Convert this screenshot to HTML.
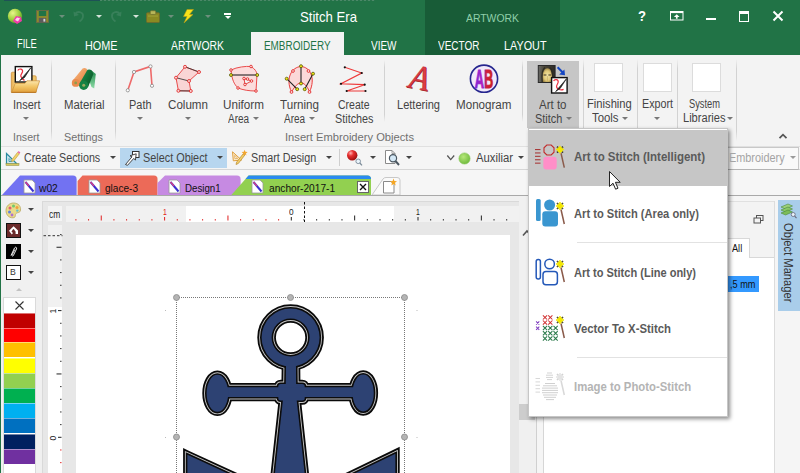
<!DOCTYPE html>
<html>
<head>
<meta charset="utf-8">
<title>Stitch Era</title>
<style>
html,body{margin:0;padding:0;}
body{width:800px;height:473px;overflow:hidden;position:relative;background:#fff;font-family:"Liberation Sans",sans-serif;font-size:12px;color:#444;}
.a{position:absolute;}
.t{position:absolute;white-space:nowrap;line-height:14px;transform-origin:0 50%;}
.c{position:absolute;white-space:nowrap;line-height:14px;text-align:center;}
#title{left:0;top:0;width:800px;height:55px;background:#217346;}
#ctx{left:425px;top:0;width:135px;height:55px;background:#185c37;}
#ribbon{left:1px;top:55px;width:799px;height:91px;background:#f3f3f3;}
#toolbar{left:1px;top:146px;width:799px;height:24px;background:#f5f5f5;}
#tabs{left:1px;top:170px;width:799px;height:25px;background:#f6f6f6;}
#work{left:1px;top:195px;width:799px;height:278px;background:#f0f0f0;}
.sep{position:absolute;width:1px;background:#d4d4d4;top:59px;height:82px;}
.rl{color:#444;font-size:12px;}
.gl{color:#666;font-size:11.5px;}
.wt{color:#fff;font-size:12.5px;}
.arr{position:absolute;width:0;height:0;border-left:3px solid transparent;border-right:3px solid transparent;border-top:3px solid #666;}
</style>
</head>
<body>
<div class="a" style="left:0;top:0;width:1px;height:473px;background:#217346;"></div>
<div class="a" id="title"></div>
<div class="a" id="ctx"></div>
<div class="a" id="ribbon"></div>
<div class="a" id="toolbar"></div>
<div class="a" id="tabs"></div>
<div class="a" id="work"></div>
<div class="a" style="left:4px;top:0;width:96px;height:1px;background:#1e5256;"></div>
<div class="a" style="left:100px;top:0;width:275px;height:1px;background:repeating-linear-gradient(90deg,#6f9a84 0 2px,#2f7350 2px 4px);opacity:0.55;"></div>
<svg class="a" style="left:7px;top:8px" width="17" height="17" viewBox="0 0 17 17">
<defs><radialGradient id="gA" cx="35%" cy="30%" r="75%"><stop offset="0" stop-color="#e9f58a"/><stop offset="0.6" stop-color="#9ccf3c"/><stop offset="1" stop-color="#4e9a2a"/></radialGradient></defs>
<circle cx="8" cy="8" r="7.2" fill="url(#gA)"/>
<path d="M6 13 L9 8 L14 9 L15 13 L10 16 Z" fill="#f03aa8"/><path d="M8 12 L10 9.5 L13 10.2 L11 13.5Z" fill="#fbd3ec"/></svg>
<svg class="a" style="left:36px;top:10px" width="13" height="13" viewBox="0 0 14 14">
<rect x="0.5" y="0.5" width="13" height="13" fill="#8d8a2c" stroke="#6a6a48"/><rect x="3" y="1" width="8" height="5.5" fill="#217346"/><rect x="3" y="8.5" width="8" height="5" fill="#5c5c5c"/><rect x="8" y="9.5" width="2" height="3" fill="#d8d8d8"/></svg>
<div class="arr" style="left:59px;top:15px;border-left-width:3px;border-right-width:3px;border-top:3px solid #6d8f7c;"></div>
<svg class="a" style="left:72px;top:9px" width="14" height="14" viewBox="0 0 14 14"><path d="M3 5 C6 1.5 11.5 3 11 7.5 C10.8 10 9 11.5 7.5 12.5" fill="none" stroke="#38805a" stroke-width="1.8"/><path d="M1.5 2.5 L2 7.5 L7 6 Z" fill="#38805a"/></svg>
<div class="arr" style="left:96px;top:15px;border-left-width:3px;border-right-width:3px;border-top:3px solid #d5e4da;"></div>
<svg class="a" style="left:109px;top:9px" width="14" height="14" viewBox="0 0 14 14"><path d="M11 5 C8 1.5 2.5 3 3 7.5 C3.2 10 5 11.5 6.5 12.5" fill="none" stroke="#38805a" stroke-width="1.8"/><path d="M12.5 2.5 L12 7.5 L7 6 Z" fill="#38805a"/></svg>
<div class="arr" style="left:132.5px;top:15px;border-left-width:3px;border-right-width:3px;border-top:3px solid #d5e4da;"></div>
<svg class="a" style="left:146px;top:9.5px" width="14" height="13" viewBox="0 0 15 14"><rect x="0.5" y="3" width="14" height="10.5" rx="1" fill="#8b8a22" stroke="#6d6c2c"/><rect x="4.5" y="0.8" width="6" height="4" rx="1" fill="#b9b75a" stroke="#6d6c2c" stroke-width="0.8"/><rect x="2" y="6" width="11" height="1" fill="#a5a43f"/></svg>
<div class="arr" style="left:168px;top:15px;border-left-width:3px;border-right-width:3px;border-top:3px solid #6d8f7c;"></div>
<svg class="a" style="left:182px;top:9px" width="13" height="15" viewBox="0 0 13 15"><path d="M5 0.5 L11.5 0.5 L7.5 5.5 L11 5.5 L2 14 L5 7.5 L1.5 7.5 Z" fill="#f7e11a" stroke="#b59b16" stroke-width="0.6"/></svg>
<div class="arr" style="left:204.5px;top:15px;border-left-width:3px;border-right-width:3px;border-top:3px solid #6d8f7c;"></div>
<div class="a" style="left:224px;top:13px;width:7px;height:1.5px;background:#fff;"></div>
<div class="arr" style="left:224.5px;top:16px;border-left-width:3px;border-right-width:3px;border-top:3px solid #fff;"></div>
<svg class="a" style="left:669px;top:10px" width="16" height="12" viewBox="0 0 16 12"><rect x="1.5" y="1.5" width="12.5" height="8.5" fill="none" stroke="#fff" stroke-width="1"/><rect x="1.5" y="1.5" width="12.5" height="1.6" fill="#fff"/><path d="M7.75 4.2 L10.6 7 L8.6 7 L8.6 8.8 L6.9 8.8 L6.9 7 L4.9 7 Z" fill="#fff"/></svg>
<div class="a" style="left:706px;top:18px;width:10px;height:2px;background:#fff;"></div>
<div class="a" style="left:739px;top:11px;width:8px;height:7px;border:1px solid #fff;border-top:3px solid #fff;"></div>
<svg class="a" style="left:772px;top:10px" width="12" height="12" viewBox="0 0 12 12"><path d="M1.5 1.5 L10.5 10.5 M10.5 1.5 L1.5 10.5" stroke="#fff" stroke-width="2"/></svg>
<div class="a" style="left:251px;top:32px;width:93px;height:24px;background:#f3f3f3;"></div>
<div class="a" style="left:51px;top:59px;width:1px;height:82px;background:linear-gradient(#f3f3f3,#d2d2d2 12%,#d2d2d2 88%,#f3f3f3);"></div>
<div class="a" style="left:115px;top:59px;width:1px;height:82px;background:linear-gradient(#f3f3f3,#d2d2d2 12%,#d2d2d2 88%,#f3f3f3);"></div>
<div class="a" style="left:583px;top:59px;width:1px;height:82px;background:linear-gradient(#f3f3f3,#d2d2d2 12%,#d2d2d2 88%,#f3f3f3);"></div>
<div class="a" style="left:637px;top:59px;width:1px;height:82px;background:linear-gradient(#f3f3f3,#d2d2d2 12%,#d2d2d2 88%,#f3f3f3);"></div>
<div class="a" style="left:677px;top:59px;width:1px;height:82px;background:linear-gradient(#f3f3f3,#d2d2d2 12%,#d2d2d2 88%,#f3f3f3);"></div>
<div class="a" style="left:736px;top:59px;width:1px;height:82px;background:linear-gradient(#f3f3f3,#d2d2d2 12%,#d2d2d2 88%,#f3f3f3);"></div>
<div class="a" style="left:384px;top:60px;width:1px;height:62px;background:linear-gradient(#f3f3f3,#d2d2d2 12%,#d2d2d2 88%,#f3f3f3);"></div>
<div class="a" style="left:522px;top:60px;width:1px;height:62px;background:linear-gradient(#f3f3f3,#d2d2d2 12%,#d2d2d2 88%,#f3f3f3);"></div>
<div class="a" style="left:527px;top:61px;width:52px;height:67px;background:#c6c6c6;"></div>
<svg class="a" style="left:9px;top:63px" width="33" height="32" viewBox="9 63 33 32">
<defs><linearGradient id="gF" x1="0" y1="0" x2="0" y2="1"><stop offset="0" stop-color="#fbe6ac"/><stop offset="0.5" stop-color="#f2c566"/><stop offset="1" stop-color="#e2a03c"/></linearGradient>
<linearGradient id="gF2" x1="0" y1="0" x2="1" y2="0"><stop offset="0" stop-color="#e9b050"/><stop offset="0.25" stop-color="#f8dc98"/><stop offset="1" stop-color="#efc468"/></linearGradient></defs>
<path d="M11.3 92.3 L11.3 73.4 Q11.3 72.2 12.5 72.2 L15.5 72.2 L15.5 75.8 L35 75.8 Q36.2 75.8 36.2 77 L36.2 92.3 Z" fill="url(#gF2)" stroke="#c88a34" stroke-width="0.7"/>
<rect x="15.3" y="66.6" width="16.6" height="15.4" fill="#fff" stroke="#111" stroke-width="1.4"/>
<path d="M17.8 70.6 C18.8 68.2 22.8 68.6 22.6 71.4 C22.4 73.4 20.4 74.2 20.8 76.2 C21.2 78.2 23 79.6 24.5 80.4" fill="none" stroke="#ee3040" stroke-width="1.2"/>
<path d="M30.8 67.8 L23.4 76.4 L19.6 80.8 L24.6 77.4 Z" fill="#222" stroke="#222" stroke-width="0.7"/>
<path d="M15.2 83.4 L24.9 83.4 L26.9 80.8 L39.6 80.8 L35.8 92.4 L11.6 92.4 Z" fill="url(#gF)" stroke="#c98c36" stroke-width="0.7"/>
<path d="M11.6 92.4 L35.8 92.4" stroke="#b87424" stroke-width="0.9"/>
</svg>
<svg class="a" style="left:68px;top:63px" width="32" height="30" viewBox="68 63 32 30">
<defs><linearGradient id="gO" x1="0" y1="0" x2="1" y2="1"><stop offset="0" stop-color="#f8c08c"/><stop offset="0.5" stop-color="#ee9a5c"/><stop offset="1" stop-color="#d87a3c"/></linearGradient>
<linearGradient id="gG" x1="0" y1="0" x2="1" y2="0.6"><stop offset="0" stop-color="#2e9858"/><stop offset="0.45" stop-color="#157a3e"/><stop offset="1" stop-color="#0c5a2a"/></linearGradient>
<linearGradient id="gGl" x1="0" y1="0" x2="0" y2="1"><stop offset="0" stop-color="#1f8a4a"/><stop offset="1" stop-color="#8fdca8"/></linearGradient></defs>
<path d="M72.7 80.5 L82.6 68.4 Q84.6 67.4 86.6 68.8 L88.4 73 L78.7 85.3 Z" fill="url(#gO)"/>
<circle cx="75.7" cy="82.9" r="3.9" fill="#ea8c4e"/><circle cx="75.7" cy="82.9" r="1.4" fill="#8e9c4c"/>
<path d="M91.5 70.5 L95.8 74 L94.2 88.6 L91.5 87 L89 80 Z" fill="url(#gGl)"/>
<path d="M79.6 83.2 L87.5 69.8 Q89.7 68.8 91.8 70.4 L93.4 74 L87.9 87.6 Z" fill="url(#gG)"/>
<circle cx="83.7" cy="85.3" r="4.6" fill="#168244"/><circle cx="83.7" cy="85.3" r="1.5" fill="#9aa860"/>
</svg>
<svg class="a" style="left:122px;top:60px" width="40" height="36" viewBox="122 60 40 36"><path d="M127.8 90.3 L134 72 L150.5 66.4 L152 85.8" fill="none" stroke="#ee6a6a" stroke-width="1.6"/><circle cx="127.8" cy="90.3" r="1.6" fill="#fff" stroke="#888" stroke-width="0.8"/><circle cx="134" cy="72" r="1.6" fill="#fff" stroke="#888" stroke-width="0.8"/><circle cx="150.5" cy="66.4" r="1.6" fill="#fff" stroke="#888" stroke-width="0.8"/><circle cx="152" cy="85.8" r="1.6" fill="#fff" stroke="#888" stroke-width="0.8"/></svg>
<svg class="a" style="left:170px;top:60px" width="36" height="36" viewBox="170 60 36 36"><path d="M185 66.8 L199 72 L189 81 L190.8 91 L178.4 90.8 L176 77.7 Z" fill="#f9d5d5" stroke="#e84c4c" stroke-width="1"/><path d="M185 66.8 L199 72 M176 77.7 L189 81 M178.4 90.8 L190.8 91" stroke="#333" stroke-width="0.85"/><circle cx="185" cy="66.8" r="1.5" fill="#f9d5d5" stroke="#e02020" stroke-width="0.8"/><circle cx="199" cy="72" r="1.5" fill="#f9d5d5" stroke="#e02020" stroke-width="0.8"/><circle cx="176" cy="77.7" r="1.5" fill="#f9d5d5" stroke="#e02020" stroke-width="0.8"/><circle cx="189" cy="81" r="1.5" fill="#f9d5d5" stroke="#e02020" stroke-width="0.8"/><circle cx="178.4" cy="90.8" r="1.5" fill="#f9d5d5" stroke="#e02020" stroke-width="0.8"/><circle cx="190.8" cy="91" r="1.5" fill="#f9d5d5" stroke="#e02020" stroke-width="0.8"/></svg>
<svg class="a" style="left:226px;top:60px" width="36" height="36" viewBox="226 60 36 36"><path d="M231 70 C237 67 246 66 251 66.5 C255 69 257 72 257 75 L256 91 C249 91 243 90 238 88 C234 84 232 80 231 70 Z" fill="#fbdcdc" stroke="#ea4c4c" stroke-width="1"/><path d="M244 78.5 L251.5 81 L245 84.5 Z" fill="#f3f3f3" stroke="#e02020" stroke-width="0.8"/><circle cx="231" cy="70" r="1.3" fill="#fbdcdc" stroke="#e02020" stroke-width="0.8"/><circle cx="251" cy="66.5" r="1.3" fill="#fbdcdc" stroke="#e02020" stroke-width="0.8"/><circle cx="256" cy="91" r="1.3" fill="#fbdcdc" stroke="#e02020" stroke-width="0.8"/><circle cx="238" cy="88" r="1.3" fill="#fbdcdc" stroke="#e02020" stroke-width="0.8"/><circle cx="244" cy="78.5" r="1.3" fill="#fbdcdc" stroke="#e02020" stroke-width="0.8"/><circle cx="251.5" cy="81" r="1.3" fill="#fbdcdc" stroke="#e02020" stroke-width="0.8"/><circle cx="245" cy="84.5" r="1.3" fill="#fbdcdc" stroke="#e02020" stroke-width="0.8"/><circle cx="247.5" cy="79" r="1.3" fill="#fbdcdc" stroke="#e02020" stroke-width="0.8"/><path d="M231 75 L257.2 75" stroke="#111" stroke-width="1"/><circle cx="231" cy="75" r="1.5" fill="#e8e020" stroke="#55550a" stroke-width="0.8"/><circle cx="257.2" cy="75" r="1.5" fill="#e8e020" stroke="#55550a" stroke-width="0.8"/></svg>
<svg class="a" style="left:282px;top:60px" width="36" height="36" viewBox="282 60 36 36"><path d="M291.5 92 C285 78 292 67 301 66.5 C310 67 316 78 309.5 92 C308 88 306 84 301 82.5 C296 84 294 88 291.5 92 Z" fill="#fbd8d8" stroke="#ea3c3c" stroke-width="1"/><path d="M301 66.2 L301 83.5 M286.7 78.7 L297.2 89.2 M313 73.7 L304.7 89.2" stroke="#222" stroke-width="1.1"/><circle cx="291.5" cy="92" r="1.4" fill="#fbd8d8" stroke="#e02020" stroke-width="0.8"/><circle cx="309.5" cy="92" r="1.4" fill="#fbd8d8" stroke="#e02020" stroke-width="0.8"/><circle cx="293" cy="71" r="1.4" fill="#fbd8d8" stroke="#e02020" stroke-width="0.8"/><circle cx="308.5" cy="71" r="1.4" fill="#fbd8d8" stroke="#e02020" stroke-width="0.8"/><circle cx="301" cy="66.2" r="1.5" fill="#f0e810" stroke="#55550a" stroke-width="0.8"/><circle cx="301" cy="83.5" r="1.5" fill="#f0e810" stroke="#55550a" stroke-width="0.8"/><circle cx="286.7" cy="78.7" r="1.5" fill="#f0e810" stroke="#55550a" stroke-width="0.8"/><circle cx="297.2" cy="89.2" r="1.5" fill="#f0e810" stroke="#55550a" stroke-width="0.8"/><circle cx="313" cy="73.7" r="1.5" fill="#f0e810" stroke="#55550a" stroke-width="0.8"/><circle cx="304.7" cy="89.2" r="1.5" fill="#f0e810" stroke="#55550a" stroke-width="0.8"/></svg>
<svg class="a" style="left:338px;top:62px" width="32" height="34" viewBox="338 62 32 34"><path d="M344.8 67.3 L361.7 73 L341 83.8 L364.7 84.7 L346.7 91 L365.5 91" fill="none" stroke="#ee3a3a" stroke-width="1.2"/><circle cx="344.8" cy="67.3" r="1.1" fill="#111"/><circle cx="361.7" cy="73" r="1.1" fill="#111"/><circle cx="341" cy="83.8" r="1.1" fill="#111"/><circle cx="364.7" cy="84.7" r="1.1" fill="#111"/><circle cx="346.7" cy="91" r="1.1" fill="#111"/><circle cx="365.5" cy="91" r="1.1" fill="#111"/></svg>
<div class="a" style="left:408.4px;top:59.8px;width:30px;height:38px;font-family:'Liberation Serif',serif;font-style:italic;font-size:35px;line-height:38px;color:#dc3c46;-webkit-text-stroke:0.5px #c02a34;text-shadow:0.7px 0.7px 0 #8a1a22;transform:rotate(11deg) scaleX(0.92);transform-origin:50% 60%;">A</div>
<svg class="a" style="left:468px;top:63px" width="32" height="32" viewBox="0 0 32 32">
<defs><linearGradient id="gM" x1="0" y1="0" x2="1" y2="0"><stop offset="0" stop-color="#7a28d8"/><stop offset="0.42" stop-color="#b020c0"/><stop offset="0.52" stop-color="#5030c0"/><stop offset="0.6" stop-color="#d02040"/><stop offset="1" stop-color="#c82020"/></linearGradient></defs>
<circle cx="16" cy="15.7" r="13.6" fill="#f1eafa" stroke="#26268e" stroke-width="1.6"/>
<text x="16" y="24.8" text-anchor="middle" font-family="Liberation Sans" font-weight="bold" font-size="25.5" fill="url(#gM)" stroke="url(#gM)" stroke-width="0.9" textLength="18.5" lengthAdjust="spacingAndGlyphs">AB</text></svg>
<svg class="a" style="left:536px;top:63px" width="34" height="32" viewBox="536 63 34 32">
<defs><linearGradient id="gMB" x1="0" y1="0" x2="1" y2="0"><stop offset="0" stop-color="#6a6a68"/><stop offset="0.35" stop-color="#4a4638"/><stop offset="1" stop-color="#2c2a26"/></linearGradient>
<radialGradient id="gMona" cx="50%" cy="55%" r="60%"><stop offset="0" stop-color="#f2e6a8"/><stop offset="0.6" stop-color="#e0c878"/><stop offset="1" stop-color="#8a7238"/></radialGradient></defs>
<rect x="538.3" y="65.5" width="16.8" height="17" fill="url(#gMB)" stroke="#2a2a2a" stroke-width="1"/>
<path d="M542.6 82 C542 74 543.5 68.3 547.4 68.2 C551.4 68.3 552.6 74 552 82 Z" fill="url(#gMona)"/>
<path d="M543.6 75 L546.4 75 M548.4 75 L551.2 75" stroke="#3a3020" stroke-width="1.1"/>
<path d="M547.4 76 L547.4 81.5" stroke="#c8ae60" stroke-width="0.7"/>
<path d="M542.2 82 C541.5 75 542.5 69 545 67.5 M552.5 82 C553 75 552.3 69 549.8 67.5" stroke="#2c2a20" stroke-width="1.2" fill="none"/>
<path d="M557.6 67.3 L563 72.8" stroke="#1446c4" stroke-width="2"/><path d="M565 75.2 L559.2 74.6 L564.4 69.4 Z" fill="#1446c4"/>
<rect x="551.6" y="77.6" width="15.5" height="15.4" fill="#fff" stroke="#111" stroke-width="1.4"/>
<path d="M553.6 81 C554.6 78.8 558.4 79.2 558.2 82 C558 84 556.2 85 556.6 87 C557.2 89.4 560.5 90.6 563.6 89.4" fill="none" stroke="#ee3040" stroke-width="1.2"/>
<path d="M566.3 79 L559 87.5 L555.6 91.6 L560.2 88.4 Z" fill="#222" stroke="#222" stroke-width="0.7"/>
</svg>
<div class="a" style="left:594px;top:63px;width:27px;height:26.5px;background:#fff;border:1px solid #dcdcdc;"></div>
<div class="a" style="left:643px;top:63px;width:27px;height:26.5px;background:#fff;border:1px solid #dcdcdc;"></div>
<div class="a" style="left:692px;top:63px;width:27px;height:26.5px;background:#fff;border:1px solid #dcdcdc;"></div>
<div class="arr" style="left:23px;top:117px;border-left-width:3px;border-right-width:3px;border-top:3px solid #777;"></div>
<div class="arr" style="left:136.5px;top:117px;border-left-width:3px;border-right-width:3px;border-top:3px solid #777;"></div>
<div class="arr" style="left:184.5px;top:117px;border-left-width:3px;border-right-width:3px;border-top:3px solid #777;"></div>
<div class="arr" style="left:253px;top:117px;border-left-width:3px;border-right-width:3px;border-top:3px solid #777;"></div>
<div class="arr" style="left:309px;top:117px;border-left-width:3px;border-right-width:3px;border-top:3px solid #777;"></div>
<div class="arr" style="left:566px;top:117px;border-left-width:3px;border-right-width:3px;border-top:3px solid #777;"></div>
<div class="arr" style="left:622px;top:117px;border-left-width:3px;border-right-width:3px;border-top:3px solid #777;"></div>
<div class="arr" style="left:654px;top:117px;border-left-width:3px;border-right-width:3px;border-top:3px solid #777;"></div>
<div class="arr" style="left:727px;top:117px;border-left-width:3px;border-right-width:3px;border-top:3px solid #777;"></div>
<svg class="a" style="left:778px;top:132px" width="10" height="8" viewBox="0 0 10 8"><path d="M1.5 6.2 L5 2.6 L8.5 6.2" fill="none" stroke="#555" stroke-width="1.7"/></svg>
<div class="a" style="left:1px;top:145.6px;width:799px;height:1px;background:#e0e0e0;"></div>
<div class="a" style="left:1px;top:169px;width:799px;height:1px;background:#d6d6d6;"></div>
<div class="a" style="left:120px;top:148px;width:107px;height:20px;background:#b7d6ef;"></div>
<svg class="a" style="left:5px;top:149px" width="17" height="17" viewBox="0 0 17 17">
<path d="M1.5 15 L1.5 4.5 L12 15 Z" fill="#cfe8f0" stroke="#2a8aa0" stroke-width="1.2"/><path d="M4 12.5 L4 9.5 L7 12.5 Z" fill="#f3f3f3" stroke="#2a8aa0" stroke-width="0.8"/>
<rect x="1" y="14.5" width="13" height="2" fill="#d8c860" stroke="#8a8a40" stroke-width="0.5"/>
<path d="M7 10.5 L12.6 3.3 L14.4 4.7 L8.8 11.9 L6.6 12.6 Z" fill="#f2d36a" stroke="#b89a40" stroke-width="0.6"/><path d="M12.6 3.3 L13.6 2 L15.4 3.4 L14.4 4.7Z" fill="#e868b0"/></svg>
<div class="arr" style="left:109.5px;top:156px;border-left-width:3px;border-right-width:3px;border-top:3px solid #444;"></div>
<svg class="a" style="left:124px;top:150px" width="17" height="16" viewBox="0 0 17 16">
<rect x="8.5" y="1.5" width="6.5" height="6" fill="#fff" stroke="#333" stroke-width="1"/>
<path d="M1.5 14.5 L8 6.8 L6 5.8 L12.2 3.8 L11.4 10.2 L9.8 8.4 L3.5 15.3 Z" fill="#fff" stroke="#333" stroke-width="0.9"/></svg>
<div class="arr" style="left:217px;top:156px;border-left-width:3px;border-right-width:3px;border-top:3px solid #444;"></div>
<svg class="a" style="left:231px;top:149px" width="18" height="17" viewBox="0 0 18 17">
<path d="M1.5 2.8 L10.5 11 L2.3 11.8 Z" fill="#fdeccc" stroke="#e0a040" stroke-width="1"/><path d="M3.6 6.3 L6.8 9.4 L3.9 9.7 Z" fill="#f5f5f5" stroke="#e0a040" stroke-width="0.7"/>
<path d="M5.6 13.2 L12.3 4.6 L14 5.9 L7.3 14.5 L5 15.5 Z" fill="#f3cf68" stroke="#b88a30" stroke-width="0.7"/>
<path d="M13.6 0.8 L14.4 2.8 L16.6 3 L14.9 4.4 L15.5 6.5 L13.6 5.3 L11.7 6.5 L12.3 4.4 L10.6 3 L12.8 2.8 Z" fill="#f2a630"/></svg>
<div class="arr" style="left:326px;top:156px;border-left-width:3px;border-right-width:3px;border-top:3px solid #444;"></div>
<div class="a" style="left:339px;top:149px;width:1px;height:17px;background:#cfcfcf;"></div>
<svg class="a" style="left:346px;top:149px" width="18" height="18" viewBox="0 0 18 18">
<defs><radialGradient id="gR" cx="35%" cy="30%" r="70%"><stop offset="0" stop-color="#ffb0b0"/><stop offset="0.4" stop-color="#e83030"/><stop offset="1" stop-color="#a01010"/></radialGradient></defs>
<circle cx="6.2" cy="6.2" r="5.2" fill="url(#gR)"/><circle cx="12.2" cy="12.3" r="2.3" fill="#eaf4fb" stroke="#7a8a98" stroke-width="0.9"/><path d="M13.8 14 L16 16.3" stroke="#7a8a98" stroke-width="1.2"/></svg>
<div class="arr" style="left:369.5px;top:156px;border-left-width:3px;border-right-width:3px;border-top:3px solid #444;"></div>
<svg class="a" style="left:384px;top:149px" width="17" height="18" viewBox="0 0 17 18">
<path d="M1.5 1.5 L8 1.5 L11 4.5 L11 14.5 L1.5 14.5 Z" fill="#fff" stroke="#8a8a8a" stroke-width="1"/><path d="M8 1.5 L8 4.5 L11 4.5" fill="none" stroke="#8a8a8a" stroke-width="0.8"/>
<circle cx="9" cy="9.2" r="3.6" fill="#d4e8f6" stroke="#4a5660" stroke-width="1.2"/><path d="M11.5 12 L15 16" stroke="#4a5660" stroke-width="1.9"/></svg>
<div class="arr" style="left:406px;top:156px;border-left-width:3px;border-right-width:3px;border-top:3px solid #444;"></div>
<svg class="a" style="left:446px;top:154px" width="10" height="8" viewBox="0 0 10 8"><path d="M1.3 1.5 L4.7 5.6 L8.2 1.5" fill="none" stroke="#555" stroke-width="1.3"/></svg>
<svg class="a" style="left:458px;top:152px" width="13" height="13" viewBox="0 0 13 13"><defs><radialGradient id="gGr" cx="40%" cy="35%" r="70%"><stop offset="0" stop-color="#b6e87a"/><stop offset="1" stop-color="#6cb83a"/></radialGradient></defs><circle cx="6.5" cy="6.5" r="5.6" fill="url(#gGr)" stroke="#8cc85c" stroke-width="0.6"/></svg>
<div class="arr" style="left:518px;top:156px;border-left-width:3px;border-right-width:3px;border-top:3px solid #444;"></div>
<div class="a" style="left:700px;top:146.5px;width:99px;height:23.5px;background:#f9f9f9;border:1px solid #c8c8c8;border-bottom:1.3px solid #b4b4b4;box-sizing:border-box;"></div>
<div class="arr" style="left:790px;top:156px;border-left-width:3px;border-right-width:3px;border-top:3px solid #9a9a9a;"></div>
<svg class="a" style="left:0;top:170px" width="420" height="27" viewBox="0 170 420 27"><path d="M2 195 L20 175.5 L73 175.5 Q76.6 175.5 76.6 179 L76.6 195 Z" fill="#7272f2"/><path d="M77.6 195 L77.6 181 L82.5 175.5 L154 175.5 Q157.5 175.5 157.5 179 L157.5 195 Z" fill="#ec6a58"/><path d="M157.5 195 L157.5 183 L165 175.5 L237 175.5 Q240.6 175.5 240.6 179 L240.6 195 Z" fill="#c68ae2"/><path d="M231.4 195 L248.6 175.5 L367.5 175.5 Q371 175.5 371 179 L371 195 Z" fill="#92d050"/><path d="M248.6 175.5 L367.5 175.5 Q371 175.5 371 179 L245.6 179 Z" fill="#2a8af0"/><path d="M372 195 L383 179 Q384 177.5 386 177.5 L397 177.5 Q400 177.5 400 180 L400 195 Z" fill="#fafafa" stroke="#c8c8c8" stroke-width="1"/></svg>
<svg class="a" style="left:22.5px;top:179px" width="13" height="15" viewBox="0 0 13 15"><path d="M1 1 L9 1 L12 4 L12 14 L1 14 Z" fill="#fff" stroke="#9a9a9a" stroke-width="0.8"/><path d="M2.5 3 L10.5 12.5" stroke="#3a30d0" stroke-width="2"/><path d="M2.5 3 L6 7" stroke="#e04080" stroke-width="1.2"/></svg>
<svg class="a" style="left:88px;top:179px" width="13" height="15" viewBox="0 0 13 15"><path d="M1 1 L9 1 L12 4 L12 14 L1 14 Z" fill="#fff" stroke="#9a9a9a" stroke-width="0.8"/><path d="M2.5 3 L10.5 12.5" stroke="#3a30d0" stroke-width="2"/><path d="M2.5 3 L6 7" stroke="#e04080" stroke-width="1.2"/></svg>
<svg class="a" style="left:168px;top:179px" width="13" height="15" viewBox="0 0 13 15"><path d="M1 1 L9 1 L12 4 L12 14 L1 14 Z" fill="#fff" stroke="#9a9a9a" stroke-width="0.8"/><path d="M2.5 3 L10.5 12.5" stroke="#3a30d0" stroke-width="2"/><path d="M2.5 3 L6 7" stroke="#e04080" stroke-width="1.2"/></svg>
<svg class="a" style="left:251px;top:179px" width="13" height="15" viewBox="0 0 13 15"><path d="M1 1 L9 1 L12 4 L12 14 L1 14 Z" fill="#fff" stroke="#9a9a9a" stroke-width="0.8"/><path d="M2.5 3 L10.5 12.5" stroke="#3a30d0" stroke-width="2"/><path d="M2.5 3 L6 7" stroke="#e04080" stroke-width="1.2"/></svg>
<div class="a" style="left:357px;top:181px;width:10px;height:10px;background:#fff;border:1px solid #666;"></div>
<svg class="a" style="left:358px;top:182px" width="10" height="10" viewBox="0 0 10 10"><path d="M2 2 L8 8 M8 2 L2 8" stroke="#111" stroke-width="1.4"/></svg>
<svg class="a" style="left:382px;top:178px" width="16" height="16" viewBox="0 0 16 16"><path d="M1.5 3.5 L9 3.5 L12 6.5 L12 15 L1.5 15 Z" fill="#fff" stroke="#8a8a8a" stroke-width="1"/>
<path d="M11.5 0.5 L12.4 3 L15 3.2 L13 4.8 L13.7 7.4 L11.5 6 L9.3 7.4 L10 4.8 L8 3.2 L10.6 3 Z" fill="#f5a623"/></svg>
<div class="a" style="left:1px;top:195px;width:799px;height:1px;background:#a9a9a9;"></div>
<div class="a" style="left:1px;top:196px;width:41px;height:277px;background:#f0f0f0;"></div>
<div class="a" style="left:42px;top:201px;width:1px;height:272px;background:#d9d9d9;"></div>
<div class="a" style="left:43px;top:202px;width:476px;height:271px;background:#e7e7e7;"></div>
<div class="a" style="left:42px;top:201px;width:478px;height:1px;background:#d9d9d9;"></div>
<div class="a" style="left:48px;top:206px;width:14px;height:15px;background:#f4f4f4;"></div>
<div class="a" style="left:66px;top:206px;width:453px;height:16px;background:#f1f1f1;"></div>
<div class="a" style="left:186px;top:206px;width:208px;height:16px;background:#fff;"></div>
<div class="a" style="left:48px;top:225px;width:14px;height:248px;background:#f1f1f1;"></div>
<div class="a" style="left:48px;top:307px;width:14px;height:166px;background:#fff;"></div>
<div class="a" style="left:76px;top:235px;width:433.5px;height:238px;background:#fff;"></div>
<svg class="a" style="left:0;top:196px" width="520" height="277" viewBox="0 196 520 277"><rect x="75.41" y="219.10" width="1" height="1.4" fill="#e02020"/><rect x="88.08" y="219.10" width="1" height="1.4" fill="#e02020"/><rect x="100.75" y="215.50" width="1" height="5" fill="#e02020"/><rect x="113.42" y="219.10" width="1" height="1.4" fill="#e02020"/><rect x="126.09" y="219.10" width="1" height="1.4" fill="#e02020"/><rect x="138.76" y="219.10" width="1" height="1.4" fill="#e02020"/><rect x="151.43" y="219.10" width="1" height="1.4" fill="#e02020"/><rect x="164.10" y="217.00" width="1" height="3.5" fill="#e02020"/><rect x="176.77" y="219.10" width="1" height="1.4" fill="#e02020"/><rect x="189.44" y="219.10" width="1" height="1.4" fill="#e02020"/><rect x="202.11" y="219.10" width="1" height="1.4" fill="#e02020"/><rect x="214.78" y="219.10" width="1" height="1.4" fill="#e02020"/><rect x="227.45" y="215.50" width="1" height="5" fill="#e02020"/><rect x="240.12" y="219.10" width="1" height="1.4" fill="#e02020"/><rect x="252.79" y="219.10" width="1" height="1.4" fill="#e02020"/><rect x="265.46" y="219.10" width="1" height="1.4" fill="#e02020"/><rect x="278.13" y="219.10" width="1" height="1.4" fill="#e02020"/><rect x="290.80" y="217.00" width="1" height="3.5" fill="#222"/><rect x="303.47" y="219.10" width="1" height="1.4" fill="#222"/><rect x="316.14" y="219.10" width="1" height="1.4" fill="#222"/><rect x="328.81" y="219.10" width="1" height="1.4" fill="#222"/><rect x="341.48" y="219.10" width="1" height="1.4" fill="#222"/><rect x="354.15" y="215.50" width="1" height="5" fill="#222"/><rect x="366.82" y="219.10" width="1" height="1.4" fill="#222"/><rect x="379.49" y="219.10" width="1" height="1.4" fill="#222"/><rect x="392.16" y="219.10" width="1" height="1.4" fill="#222"/><rect x="404.83" y="219.10" width="1" height="1.4" fill="#222"/><rect x="417.50" y="217.00" width="1" height="3.5" fill="#222"/><rect x="430.17" y="219.10" width="1" height="1.4" fill="#222"/><rect x="442.84" y="219.10" width="1" height="1.4" fill="#222"/><rect x="455.51" y="219.10" width="1" height="1.4" fill="#222"/><rect x="468.18" y="219.10" width="1" height="1.4" fill="#222"/><rect x="480.85" y="215.50" width="1" height="5" fill="#222"/><rect x="493.52" y="219.10" width="1" height="1.4" fill="#222"/><rect x="506.19" y="219.10" width="1" height="1.4" fill="#222"/><rect x="60.10" y="462.14" width="1.4" height="1" fill="#e02020"/><rect x="60.10" y="449.47" width="1.4" height="1" fill="#e02020"/><rect x="58.00" y="436.80" width="3.5" height="1" fill="#222"/><rect x="60.10" y="424.13" width="1.4" height="1" fill="#222"/><rect x="60.10" y="411.46" width="1.4" height="1" fill="#222"/><rect x="60.10" y="398.79" width="1.4" height="1" fill="#222"/><rect x="60.10" y="386.12" width="1.4" height="1" fill="#222"/><rect x="56.50" y="373.45" width="5" height="1" fill="#222"/><rect x="60.10" y="360.78" width="1.4" height="1" fill="#222"/><rect x="60.10" y="348.11" width="1.4" height="1" fill="#222"/><rect x="60.10" y="335.44" width="1.4" height="1" fill="#222"/><rect x="60.10" y="322.77" width="1.4" height="1" fill="#222"/><rect x="58.00" y="310.10" width="3.5" height="1" fill="#222"/><rect x="60.10" y="297.43" width="1.4" height="1" fill="#222"/><rect x="60.10" y="284.76" width="1.4" height="1" fill="#222"/><rect x="60.10" y="272.09" width="1.4" height="1" fill="#222"/><rect x="60.10" y="259.42" width="1.4" height="1" fill="#222"/><rect x="56.50" y="246.75" width="5" height="1" fill="#222"/><rect x="60.10" y="234.08" width="1.4" height="1" fill="#222"/><path d="M304.5 202 L304.5 222" stroke="#111" stroke-width="1" stroke-dasharray="2.5 2"/><path d="M43.5 235.7 L62.5 235.7" stroke="#333" stroke-width="1" stroke-dasharray="2.5 2"/></svg>
<svg class="a" style="left:5px;top:202px" width="17" height="17" viewBox="0 0 17 17">
<path d="M8.5 1 C13.5 1 16 4.5 15.5 8 C15 11.5 12.5 10 11 11.5 C9.5 13 11.5 15.5 8 15.8 C3.5 16 1 12.5 1 8.5 C1 4 4.5 1 8.5 1 Z" fill="#eadb8a" stroke="#b8a860" stroke-width="0.8"/>
<circle cx="5" cy="6" r="1.5" fill="#e06070"/><circle cx="8.5" cy="4" r="1.5" fill="#70c870"/><circle cx="12" cy="5.5" r="1.5" fill="#f0a040"/><circle cx="4.5" cy="10" r="1.5" fill="#6080e0"/><circle cx="7" cy="13" r="1.4" fill="#b070d0"/><circle cx="12.3" cy="8.6" r="1.2" fill="#60c0d0"/></svg>
<div class="a" style="left:6px;top:223px;width:13px;height:13px;background:#6b2a2a;border:1px solid #111;"></div>
<svg class="a" style="left:6px;top:223px" width="15" height="15" viewBox="0 0 15 15"><path d="M3 7.8 L7.6 3.2 L12 7.6 L12 11 L9.6 11 L9.6 8.4 L7.4 6.4 L5.4 8.4 L7 10 L5.8 11.4 Z" fill="#fff"/><path d="M6.2 7.2 L7.5 5.9 L8.8 7.2 L7.5 8.5 Z" fill="#6b2a2a"/></svg>
<div class="a" style="left:6px;top:244px;width:15px;height:15px;background:#000;"></div>
<svg class="a" style="left:6px;top:244px" width="15" height="15" viewBox="0 0 15 15"><path d="M5 11.5 L8.5 4 C9.3 2.5 11.3 3.3 10.5 5 L7.3 11.6 C6.9 12.5 5.6 12 6 11 L8.8 5.5" fill="none" stroke="#fff" stroke-width="0.9"/></svg>
<div class="a" style="left:6px;top:265px;width:13px;height:13px;background:#fff;border:1px solid #111;"></div>
<div class="arr" style="left:27.7px;top:208px;border-left-width:3px;border-right-width:3px;border-top:3px solid #444;"></div>
<div class="arr" style="left:27.7px;top:229px;border-left-width:3px;border-right-width:3px;border-top:3px solid #444;"></div>
<div class="arr" style="left:27.7px;top:249.5px;border-left-width:3px;border-right-width:3px;border-top:3px solid #444;"></div>
<div class="arr" style="left:27.7px;top:270.5px;border-left-width:3px;border-right-width:3px;border-top:3px solid #444;"></div>
<div class="a" style="left:16px;top:288px;width:0;height:0;border-left:3.5px solid transparent;border-right:3.5px solid transparent;border-bottom:3.5px solid #c2c2c2;"></div>
<div class="a" style="left:2.5px;top:297px;width:31px;height:176px;background:#fff;border-left:1px solid #dadada;border-right:1px solid #dadada;border-top:1px solid #dadada;"></div>
<svg class="a" style="left:13.5px;top:299.7px" width="11" height="11" viewBox="0 0 11 11"><path d="M1.5 1.5 L9.5 9.5 M9.5 1.5 L1.5 9.5" stroke="#333" stroke-width="1.1"/></svg>
<div class="a" style="left:3.5px;top:312.6px;width:31px;height:15.2px;background:#c00000;border-top:1px solid rgba(255,255,255,0.45);box-sizing:border-box;"></div>
<div class="a" style="left:3.5px;top:327.8px;width:31px;height:14.6px;background:#ff0000;border-top:1px solid rgba(255,255,255,0.45);box-sizing:border-box;"></div>
<div class="a" style="left:3.5px;top:342.4px;width:31px;height:15.1px;background:#ffc000;border-top:1px solid rgba(255,255,255,0.45);box-sizing:border-box;"></div>
<div class="a" style="left:3.5px;top:357.5px;width:31px;height:15.5px;background:#ffff00;border-top:1px solid rgba(255,255,255,0.45);box-sizing:border-box;"></div>
<div class="a" style="left:3.5px;top:373px;width:31px;height:15px;background:#92d050;border-top:1px solid rgba(255,255,255,0.45);box-sizing:border-box;"></div>
<div class="a" style="left:3.5px;top:388px;width:31px;height:15px;background:#00b050;border-top:1px solid rgba(255,255,255,0.45);box-sizing:border-box;"></div>
<div class="a" style="left:3.5px;top:403px;width:31px;height:15.4px;background:#00b0f0;border-top:1px solid rgba(255,255,255,0.45);box-sizing:border-box;"></div>
<div class="a" style="left:3.5px;top:418.4px;width:31px;height:15.1px;background:#0070c0;border-top:1px solid rgba(255,255,255,0.45);box-sizing:border-box;"></div>
<div class="a" style="left:3.5px;top:433.5px;width:31px;height:15.1px;background:#002060;border-top:1px solid rgba(255,255,255,0.45);box-sizing:border-box;"></div>
<div class="a" style="left:3.5px;top:448.6px;width:31px;height:15.1px;background:#7030a0;border-top:1px solid rgba(255,255,255,0.45);box-sizing:border-box;"></div>
<div class="a" style="left:519px;top:201px;width:17px;height:272px;background:#f0f0f0;"></div>
<div class="a" style="left:519px;top:404px;width:16px;height:16px;background:#cdcdcd;"></div>
<svg class="a" style="left:520px;top:228px" width="14" height="10" viewBox="0 0 14 10"><path d="M3 7.5 L7 3 L11 7.5" fill="none" stroke="#555" stroke-width="1.6"/></svg>
<div class="a" style="left:536px;top:196px;width:264px;height:277px;background:#f5f5f5;"></div>
<div class="a" style="left:535.5px;top:201px;width:1px;height:272px;background:#d0d0d0;"></div>
<div class="a" style="left:543px;top:201px;width:232px;height:272px;background:#fff;border-left:1px solid #d6d6d6;border-right:1px solid #dcdcdc;box-sizing:border-box;"></div>
<div class="a" style="left:544px;top:201px;width:230px;height:56px;background:#f3f3f3;border-top:1px solid #e0e0e0;box-sizing:border-box;"></div>
<div class="a" style="left:544px;top:257px;width:230px;height:1px;background:#d8d8d8;"></div>
<div class="a" style="left:720px;top:238px;width:30px;height:20px;background:#fff;border:1px solid #d8d8d8;border-bottom:none;box-sizing:border-box;"></div>
<div class="a" style="left:700px;top:275.5px;width:59px;height:16px;background:#3399ff;"></div>
<svg class="a" style="left:753px;top:214px" width="11" height="10" viewBox="0 0 11 10"><rect x="3.5" y="1.5" width="6.5" height="5" fill="#f3f3f3" stroke="#555" stroke-width="1"/><rect x="1" y="4" width="6.5" height="5" fill="#f3f3f3" stroke="#555" stroke-width="1"/></svg>
<div class="a" style="left:777.5px;top:200px;width:23px;height:111px;background:#a9cdea;"></div>
<svg class="a" style="left:780px;top:203px" width="18" height="17" viewBox="0 0 18 17">
<path d="M1 4 L8 1 L12.5 3 L5.5 6 Z" fill="#9ed07a" stroke="#4a8a3a" stroke-width="0.6"/><path d="M1 7 L8 4 L12.5 6 L5.5 9 Z" fill="#8cc868" stroke="#4a8a3a" stroke-width="0.6"/><path d="M1 10 L8 7 L12.5 9 L5.5 12 Z" fill="#7cbc58" stroke="#4a8a3a" stroke-width="0.6"/>
<circle cx="13.2" cy="11.5" r="2" fill="#e8f2fa" stroke="#667" stroke-width="0.8"/><path d="M14.6 13 L16.5 15.2" stroke="#667" stroke-width="1.1"/></svg>
<svg class="a" style="left:75px;top:234px" width="434" height="239" viewBox="75 234 434 239"><path d="M261.6 337.5 a29 29 0 1 0 58 0 a29 29 0 1 0 -58 0 Z M271.6 337.5 a19 19 0 1 0 38 0 a19 19 0 1 0 -38 0 Z" fill="none" stroke="#0a0a0a" stroke-width="8.6" stroke-linejoin="round" stroke-miterlimit="6"/><path d="M286.1 360 L295.9 360 L296.2 392 L285.6 392 Z" fill="none" stroke="#0a0a0a" stroke-width="8.6" stroke-linejoin="round" stroke-miterlimit="6"/><path d="M283.8 392 L295.8 392 L305.40000000000003 480 L274.20000000000005 480 Z" fill="none" stroke="#0a0a0a" stroke-width="8.6" stroke-linejoin="round" stroke-miterlimit="6"/><path d="M278.3 386.5 Q278.3 384 280.8 384 L302.2 384 Q304.7 384 304.7 386.5 L304.7 398 Q304.7 400.5 302.2 400.5 L280.8 400.5 Q278.3 400.5 278.3 398 Z" fill="none" stroke="#0a0a0a" stroke-width="8.6" stroke-linejoin="round" stroke-miterlimit="6"/><path d="M217 387.3 L364 387.3 L364 396.9 L217 396.9 Z" fill="none" stroke="#0a0a0a" stroke-width="8.6" stroke-linejoin="round" stroke-miterlimit="6"/><path d="M206.6 393.3 a10.8 18.5 0 1 0 21.6 0 a10.8 18.5 0 1 0 -21.6 0 Z" fill="none" stroke="#0a0a0a" stroke-width="8.6" stroke-linejoin="round" stroke-miterlimit="6"/><path d="M352.6 393.0 a10.6 18.5 0 1 0 21.2 0 a10.6 18.5 0 1 0 -21.2 0 Z" fill="none" stroke="#0a0a0a" stroke-width="8.6" stroke-linejoin="round" stroke-miterlimit="6"/><path d="M187.4 454.8 L243 480.4 L243 500 L187.4 500 Z" fill="none" stroke="#0a0a0a" stroke-width="8.6" stroke-linejoin="miter" stroke-miterlimit="6"/><path d="M395.4 453.7 L341 480 L341 500 L395.4 500 Z" fill="none" stroke="#0a0a0a" stroke-width="8.6" stroke-linejoin="miter" stroke-miterlimit="6"/><path d="M261.6 337.5 a29 29 0 1 0 58 0 a29 29 0 1 0 -58 0 Z M271.6 337.5 a19 19 0 1 0 38 0 a19 19 0 1 0 -38 0 Z" fill="none" stroke="#c6c6c6" stroke-width="5.0" stroke-linejoin="round" stroke-miterlimit="6"/><path d="M286.1 360 L295.9 360 L296.2 392 L285.6 392 Z" fill="none" stroke="#c6c6c6" stroke-width="5.0" stroke-linejoin="round" stroke-miterlimit="6"/><path d="M283.8 392 L295.8 392 L305.40000000000003 480 L274.20000000000005 480 Z" fill="none" stroke="#c6c6c6" stroke-width="5.0" stroke-linejoin="round" stroke-miterlimit="6"/><path d="M278.3 386.5 Q278.3 384 280.8 384 L302.2 384 Q304.7 384 304.7 386.5 L304.7 398 Q304.7 400.5 302.2 400.5 L280.8 400.5 Q278.3 400.5 278.3 398 Z" fill="none" stroke="#c6c6c6" stroke-width="5.0" stroke-linejoin="round" stroke-miterlimit="6"/><path d="M217 387.3 L364 387.3 L364 396.9 L217 396.9 Z" fill="none" stroke="#c6c6c6" stroke-width="5.0" stroke-linejoin="round" stroke-miterlimit="6"/><path d="M206.6 393.3 a10.8 18.5 0 1 0 21.6 0 a10.8 18.5 0 1 0 -21.6 0 Z" fill="none" stroke="#c6c6c6" stroke-width="5.0" stroke-linejoin="round" stroke-miterlimit="6"/><path d="M352.6 393.0 a10.6 18.5 0 1 0 21.2 0 a10.6 18.5 0 1 0 -21.2 0 Z" fill="none" stroke="#c6c6c6" stroke-width="5.0" stroke-linejoin="round" stroke-miterlimit="6"/><path d="M187.4 454.8 L243 480.4 L243 500 L187.4 500 Z" fill="none" stroke="#c6c6c6" stroke-width="5.0" stroke-linejoin="miter" stroke-miterlimit="6"/><path d="M395.4 453.7 L341 480 L341 500 L395.4 500 Z" fill="none" stroke="#c6c6c6" stroke-width="5.0" stroke-linejoin="miter" stroke-miterlimit="6"/><path d="M261.6 337.5 a29 29 0 1 0 58 0 a29 29 0 1 0 -58 0 Z M271.6 337.5 a19 19 0 1 0 38 0 a19 19 0 1 0 -38 0 Z" fill="none" stroke="#0c0c0c" stroke-width="3.2" stroke-linejoin="round" stroke-miterlimit="6"/><path d="M286.1 360 L295.9 360 L296.2 392 L285.6 392 Z" fill="none" stroke="#0c0c0c" stroke-width="3.2" stroke-linejoin="round" stroke-miterlimit="6"/><path d="M283.8 392 L295.8 392 L305.40000000000003 480 L274.20000000000005 480 Z" fill="none" stroke="#0c0c0c" stroke-width="3.2" stroke-linejoin="round" stroke-miterlimit="6"/><path d="M278.3 386.5 Q278.3 384 280.8 384 L302.2 384 Q304.7 384 304.7 386.5 L304.7 398 Q304.7 400.5 302.2 400.5 L280.8 400.5 Q278.3 400.5 278.3 398 Z" fill="none" stroke="#0c0c0c" stroke-width="3.2" stroke-linejoin="round" stroke-miterlimit="6"/><path d="M217 387.3 L364 387.3 L364 396.9 L217 396.9 Z" fill="none" stroke="#0c0c0c" stroke-width="3.2" stroke-linejoin="round" stroke-miterlimit="6"/><path d="M206.6 393.3 a10.8 18.5 0 1 0 21.6 0 a10.8 18.5 0 1 0 -21.6 0 Z" fill="none" stroke="#0c0c0c" stroke-width="3.2" stroke-linejoin="round" stroke-miterlimit="6"/><path d="M352.6 393.0 a10.6 18.5 0 1 0 21.2 0 a10.6 18.5 0 1 0 -21.2 0 Z" fill="none" stroke="#0c0c0c" stroke-width="3.2" stroke-linejoin="round" stroke-miterlimit="6"/><path d="M187.4 454.8 L243 480.4 L243 500 L187.4 500 Z" fill="none" stroke="#0c0c0c" stroke-width="3.2" stroke-linejoin="miter" stroke-miterlimit="6"/><path d="M395.4 453.7 L341 480 L341 500 L395.4 500 Z" fill="none" stroke="#0c0c0c" stroke-width="3.2" stroke-linejoin="miter" stroke-miterlimit="6"/><path d="M261.6 337.5 a29 29 0 1 0 58 0 a29 29 0 1 0 -58 0 Z M271.6 337.5 a19 19 0 1 0 38 0 a19 19 0 1 0 -38 0 Z" fill="#2d4273" fill-rule="evenodd"/><path d="M286.1 360 L295.9 360 L296.2 392 L285.6 392 Z" fill="#2d4273" fill-rule="evenodd"/><path d="M283.8 392 L295.8 392 L305.40000000000003 480 L274.20000000000005 480 Z" fill="#2d4273" fill-rule="evenodd"/><path d="M278.3 386.5 Q278.3 384 280.8 384 L302.2 384 Q304.7 384 304.7 386.5 L304.7 398 Q304.7 400.5 302.2 400.5 L280.8 400.5 Q278.3 400.5 278.3 398 Z" fill="#2d4273" fill-rule="evenodd"/><path d="M217 387.3 L364 387.3 L364 396.9 L217 396.9 Z" fill="#2d4273" fill-rule="evenodd"/><path d="M206.6 393.3 a10.8 18.5 0 1 0 21.6 0 a10.8 18.5 0 1 0 -21.6 0 Z" fill="#2d4273" fill-rule="evenodd"/><path d="M352.6 393.0 a10.6 18.5 0 1 0 21.2 0 a10.6 18.5 0 1 0 -21.2 0 Z" fill="#2d4273" fill-rule="evenodd"/><path d="M187.4 454.8 L243 480.4 L243 500 L187.4 500 Z" fill="#2d4273" fill-rule="evenodd"/><path d="M395.4 453.7 L341 480 L341 500 L395.4 500 Z" fill="#2d4273" fill-rule="evenodd"/><path d="M176.5 297.5 L404.5 297.5 M176.5 297.5 L176.5 473 M404.5 297.5 L404.5 473" fill="none" stroke="#777" stroke-width="1" stroke-dasharray="1 1" shape-rendering="crispEdges"/><circle cx="176.5" cy="297.5" r="3" fill="#b4b4b4" stroke="#8a8a8a" stroke-width="0.8"/><circle cx="290.5" cy="297.5" r="3" fill="#b4b4b4" stroke="#8a8a8a" stroke-width="0.8"/><circle cx="404.5" cy="297.5" r="3" fill="#b4b4b4" stroke="#8a8a8a" stroke-width="0.8"/><circle cx="176.5" cy="437" r="3" fill="#b4b4b4" stroke="#8a8a8a" stroke-width="0.8"/><circle cx="404.5" cy="437" r="3" fill="#b4b4b4" stroke="#8a8a8a" stroke-width="0.8"/><rect x="165" y="310" width="1" height="1" fill="#bbb"/><rect x="416.5" y="310" width="1" height="1" fill="#bbb"/><rect x="165" y="437" width="1" height="1" fill="#bbb"/><rect x="416.5" y="437" width="1" height="1" fill="#bbb"/></svg>
<div class="a" style="left:50px;top:306px;width:6px;height:9px;font-size:8.5px;line-height:9px;color:#222;transform:rotate(-90deg);">1</div>
<div class="a" style="left:50px;top:432.5px;width:6px;height:9px;font-size:8.5px;line-height:9px;color:#222;transform:rotate(-90deg);">0</div>
<div class="a" style="left:748px;top:256px;width:80px;height:14px;font-size:12px;line-height:14px;color:#333;transform:rotate(90deg);transform-origin:50% 50%;white-space:nowrap;text-align:left;"><span id="om" style="display:inline-block;transform-origin:0 50%;transform:scaleX(0.93);">Object Manager</span></div>
<div class="a" style="left:528px;top:127.5px;width:200px;height:289px;background:#fff;border:1px solid #c6c6c6;box-sizing:border-box;box-shadow:1.5px 2px 4px rgba(0,0,0,0.45);"></div>
<div class="a" style="left:529px;top:129.5px;width:198px;height:56px;background:#c6c6c6;"></div>
<div class="a" style="left:577px;top:242px;width:150px;height:1px;background:#e2e2e2;"></div>
<div class="a" style="left:577px;top:357px;width:150px;height:1px;background:#e2e2e2;"></div>
<svg class="a" style="left:530px;top:140px" width="40" height="270" viewBox="530 140 40 270"><rect x="535" y="149.0" width="5.5" height="1.1" fill="#a83a3a"/><rect x="535" y="152.4" width="5.5" height="1.1" fill="#a83a3a"/><rect x="535" y="155.8" width="5.5" height="1.1" fill="#a83a3a"/><rect x="535" y="159.2" width="5.5" height="1.1" fill="#a83a3a"/><rect x="535" y="162.6" width="5.5" height="1.1" fill="#a83a3a"/><path d="M546.8 145 L551.2 145 L554 147.8 L554 152.2 L551.2 155 L546.8 155 L544 152.2 L544 147.8 Z" fill="none" stroke="#c22a2a" stroke-width="1.1"/><rect x="543.3" y="156.7" width="13.4" height="12.7" rx="3" fill="#ff8fc8"/><path d="M561 153.1 L564.3 167.6" stroke="#8a5a4a" stroke-width="1.5"/><path d="M557 146.6 L563 152.6 M563 146.6 L557 152.6" stroke="#333" stroke-width="1.6"/><rect x="557.6" y="147.2" width="4.8" height="4.8" fill="#f4e800"/><path d="M556 149.6 L564 149.6 M560 145.7 L560 153.5" stroke="#f4e800" stroke-width="1.5"/><rect x="536" y="199" width="4.7" height="22" rx="1.5" fill="#3a96d0"/><circle cx="549.6" cy="205" r="5.5" fill="#3a96d0"/><rect x="542.3" y="211.3" width="15.7" height="15.2" rx="3" fill="#3a96d0"/><path d="M561 209.5 L564.3 224" stroke="#8a5a4a" stroke-width="1.5"/><path d="M557 203 L563 209 M563 203 L557 209" stroke="#333" stroke-width="1.6"/><rect x="557.6" y="203.6" width="4.8" height="4.8" fill="#f4e800"/><path d="M556 206 L564 206 M560 202.1 L560 209.9" stroke="#f4e800" stroke-width="1.5"/><rect x="536.2" y="259.5" width="4.2" height="19.5" rx="2" fill="#fff" stroke="#2458b8" stroke-width="1.5"/><circle cx="549.6" cy="264" r="4.8" fill="#fff" stroke="#2458b8" stroke-width="1.5"/><rect x="543" y="271.5" width="14.4" height="13.2" rx="3" fill="#fff" stroke="#2458b8" stroke-width="1.5"/><path d="M561 267.5 L564.3 282" stroke="#8a5a4a" stroke-width="1.5"/><path d="M557 261 L563 267 M563 261 L557 267" stroke="#333" stroke-width="1.6"/><rect x="557.6" y="261.6" width="4.8" height="4.8" fill="#f4e800"/><path d="M556 264 L564 264 M560 260.1 L560 267.9" stroke="#f4e800" stroke-width="1.5"/><path d="M536.1 321.4 L539.3000000000001 324.6 M539.3000000000001 321.4 L536.1 324.6" stroke="#8040c0" stroke-width="1.05"/><path d="M536.1 326.7 L539.3000000000001 329.90000000000003 M539.3000000000001 326.7 L536.1 329.90000000000003" stroke="#8040c0" stroke-width="1.05"/><path d="M542.9 315.29999999999995 L547.1 319.5 M547.1 315.29999999999995 L542.9 319.5" stroke="#d03030" stroke-width="1.05"/><path d="M542.9 320.5 L547.1 324.70000000000005 M547.1 320.5 L542.9 324.70000000000005" stroke="#d03030" stroke-width="1.05"/><path d="M548.1999999999999 315.29999999999995 L552.4 319.5 M552.4 315.29999999999995 L548.1999999999999 319.5" stroke="#d03030" stroke-width="1.05"/><path d="M548.1999999999999 320.5 L552.4 324.70000000000005 M552.4 320.5 L548.1999999999999 324.70000000000005" stroke="#d03030" stroke-width="1.05"/><path d="M542.9 325.9 L547.1 330.1 M547.1 325.9 L542.9 330.1" stroke="#2a7a4a" stroke-width="1.05"/><path d="M542.9 331.2 L547.1 335.40000000000003 M547.1 331.2 L542.9 335.40000000000003" stroke="#2a7a4a" stroke-width="1.05"/><path d="M542.9 336.4 L547.1 340.6 M547.1 336.4 L542.9 340.6" stroke="#2a7a4a" stroke-width="1.05"/><path d="M548.1999999999999 325.9 L552.4 330.1 M552.4 325.9 L548.1999999999999 330.1" stroke="#2a7a4a" stroke-width="1.05"/><path d="M548.1999999999999 331.2 L552.4 335.40000000000003 M552.4 331.2 L548.1999999999999 335.40000000000003" stroke="#2a7a4a" stroke-width="1.05"/><path d="M548.1999999999999 336.4 L552.4 340.6 M552.4 336.4 L548.1999999999999 340.6" stroke="#2a7a4a" stroke-width="1.05"/><path d="M553.5 325.9 L557.7 330.1 M557.7 325.9 L553.5 330.1" stroke="#2a7a4a" stroke-width="1.05"/><path d="M553.5 331.2 L557.7 335.40000000000003 M557.7 331.2 L553.5 335.40000000000003" stroke="#2a7a4a" stroke-width="1.05"/><path d="M553.5 336.4 L557.7 340.6 M557.7 336.4 L553.5 340.6" stroke="#2a7a4a" stroke-width="1.05"/><path d="M561 323.5 L564.3 338" stroke="#8a5a4a" stroke-width="1.5"/><path d="M557 317 L563 323 M563 317 L557 323" stroke="#333" stroke-width="1.6"/><rect x="557.6" y="317.6" width="4.8" height="4.8" fill="#f4e800"/><path d="M556 320 L564 320 M560 316.1 L560 323.9" stroke="#f4e800" stroke-width="1.5"/><rect x="535.5" y="378.0" width="4.5" height="1" fill="#d8d8d8"/><rect x="535.5" y="381.4" width="4.5" height="1" fill="#d8d8d8"/><rect x="535.5" y="384.8" width="4.5" height="1" fill="#d8d8d8"/><rect x="535.5" y="388.2" width="4.5" height="1" fill="#d8d8d8"/><rect x="535.5" y="391.6" width="4.5" height="1" fill="#d8d8d8"/><rect x="547" y="372.5" width="5" height="1" fill="#d4d4d4"/><rect x="546" y="374.7" width="7" height="1" fill="#d4d4d4"/><rect x="546" y="376.9" width="7" height="1" fill="#d4d4d4"/><rect x="547" y="379.1" width="5" height="1" fill="#d4d4d4"/><rect x="545" y="383.0" width="10" height="1" fill="#d0d0d0"/><rect x="543" y="385.3" width="14" height="1" fill="#d0d0d0"/><rect x="542" y="387.6" width="16" height="1" fill="#d0d0d0"/><rect x="542" y="389.9" width="16" height="1" fill="#d0d0d0"/><rect x="542" y="392.2" width="16" height="1" fill="#d0d0d0"/><rect x="543" y="394.5" width="14" height="1" fill="#d0d0d0"/><rect x="544" y="396.8" width="12" height="1" fill="#d0d0d0"/><rect x="546" y="399.1" width="8" height="1" fill="#d0d0d0"/><path d="M561 380.5 L564.3 395" stroke="#d8d8d8" stroke-width="1.5"/><path d="M557 374 L563 380 M563 374 L557 380" stroke="#cfcfcf" stroke-width="1.6"/><rect x="557.6" y="374.6" width="4.8" height="4.8" fill="#e4e4e4"/><path d="M556 377 L564 377 M560 373.1 L560 380.9" stroke="#e4e4e4" stroke-width="1.5"/></svg>
<svg class="a" style="left:608px;top:170px" width="14" height="21" viewBox="0 0 14 21"><path d="M1.5 1.5 L1.5 16.5 L5 13.2 L7.6 19.2 L10 18.2 L7.4 12.3 L12.2 12.3 Z" fill="#fff" stroke="#222" stroke-width="1"/></svg>
<span class="t" style="left:300px;top:10px;font-size:15px;color:#fff;transform:scaleX(0.8765);">Stitch Era</span>
<span class="t" style="left:466px;top:10.5px;font-size:11.5px;color:#8fcfa9;transform:scaleX(0.9048);">ARTWORK</span>
<span class="t" style="left:637.5px;top:8.5px;font-size:14px;color:#fff;font-weight:bold;transform:scaleX(0.9343);">?</span>
<span class="t" style="left:17.3px;top:36.7px;font-size:12.5px;color:#fff;transform:scaleX(0.7460);">FILE</span>
<span class="t" style="left:84.5px;top:38.5px;font-size:12.5px;color:#fff;transform:scaleX(0.8667);">HOME</span>
<span class="t" style="left:171px;top:38.5px;font-size:12.5px;color:#fff;transform:scaleX(0.8324);">ARTWORK</span>
<span class="t" style="left:264px;top:38.5px;font-size:12.5px;color:#217346;transform:scaleX(0.7933);">EMBROIDERY</span>
<span class="t" style="left:370.5px;top:38.5px;font-size:12.5px;color:#fff;transform:scaleX(0.7980);">VIEW</span>
<span class="t" style="left:437.5px;top:38.5px;font-size:12.5px;color:#fff;transform:scaleX(0.8000);">VECTOR</span>
<span class="t" style="left:504px;top:38.5px;font-size:12.5px;color:#fff;transform:scaleX(0.8657);">LAYOUT</span>
<span class="t" style="left:12.5px;top:98px;font-size:12px;color:#444;transform:scaleX(0.9162);">Insert</span>
<span class="t" style="left:63.5px;top:98px;font-size:12px;color:#444;transform:scaleX(0.9488);">Material</span>
<span class="t" style="left:128.5px;top:98px;font-size:12px;color:#444;transform:scaleX(0.9114);">Path</span>
<span class="t" style="left:167.5px;top:98px;font-size:12px;color:#444;transform:scaleX(0.9671);">Column</span>
<span class="t" style="left:223px;top:98px;font-size:12px;color:#444;transform:scaleX(0.9758);">Uniform</span>
<span class="t" style="left:227.5px;top:112px;font-size:12px;color:#444;transform:scaleX(0.8281);">Area</span>
<span class="t" style="left:280px;top:98px;font-size:12px;color:#444;transform:scaleX(0.9689);">Turning</span>
<span class="t" style="left:283.5px;top:112px;font-size:12px;color:#444;transform:scaleX(0.8281);">Area</span>
<span class="t" style="left:337.5px;top:98px;font-size:12px;color:#444;transform:scaleX(0.8742);">Create</span>
<span class="t" style="left:334.5px;top:112px;font-size:12px;color:#444;transform:scaleX(0.9019);">Stitches</span>
<span class="t" style="left:396.5px;top:98px;font-size:12px;color:#444;transform:scaleX(0.9207);">Lettering</span>
<span class="t" style="left:456px;top:98px;font-size:12px;color:#444;transform:scaleX(0.9676);">Monogram</span>
<span class="t" style="left:538.5px;top:98px;font-size:12px;color:#444;transform:scaleX(0.9586);">Art to</span>
<span class="t" style="left:535px;top:112px;font-size:12px;color:#444;transform:scaleX(0.9095);">Stitch</span>
<span class="t" style="left:586.7px;top:97px;font-size:12px;color:#444;transform:scaleX(0.9327);">Finishing</span>
<span class="t" style="left:592.3px;top:111px;font-size:12px;color:#444;transform:scaleX(0.9459);">Tools</span>
<span class="t" style="left:641.5px;top:97px;font-size:12px;color:#444;transform:scaleX(0.8937);">Export</span>
<span class="t" style="left:689px;top:97px;font-size:12px;color:#444;transform:scaleX(0.7747);">System</span>
<span class="t" style="left:682.5px;top:111px;font-size:12px;color:#444;transform:scaleX(0.9233);">Libraries</span>
<span class="t" style="left:12.5px;top:130px;font-size:11.5px;color:#707070;transform:scaleX(0.9212);">Insert</span>
<span class="t" style="left:63.5px;top:130px;font-size:11.5px;color:#707070;transform:scaleX(0.9383);">Settings</span>
<span class="t" style="left:285px;top:130px;font-size:11.5px;color:#707070;transform:scaleX(0.9704);">Insert Embroidery Objects</span>
<span class="t" style="left:23.8px;top:151px;font-size:12px;color:#444;transform:scaleX(0.8924);">Create Sections</span>
<span class="t" style="left:142.9px;top:151px;font-size:12px;color:#444;transform:scaleX(0.9051);">Select Object</span>
<span class="t" style="left:250.6px;top:151px;font-size:12px;color:#444;transform:scaleX(0.8968);">Smart Design</span>
<span class="t" style="left:476px;top:151px;font-size:12px;color:#444;transform:scaleX(0.9401);">Auxiliar</span>
<span class="t" style="left:729px;top:151.3px;font-size:13px;color:#a4a4a4;transform:scaleX(0.8365);">Embroidery</span>
<span class="t" style="left:38.7px;top:180.5px;font-size:11.5px;color:#111;transform:scaleX(0.8906);">w02</span>
<span class="t" style="left:105px;top:180.5px;font-size:11.5px;color:#111;transform:scaleX(0.8749);">glace-3</span>
<span class="t" style="left:185px;top:180.5px;font-size:11.5px;color:#111;transform:scaleX(0.8459);">Design1</span>
<span class="t" style="left:268.7px;top:180.5px;font-size:11.5px;color:#111;transform:scaleX(0.8835);">anchor-2017-1</span>
<span class="t" style="left:49px;top:206.6px;font-size:10.5px;color:#222;transform:scaleX(0.8000);">cm</span>
<span class="t" style="left:162.6px;top:205.3px;font-size:8.5px;color:#e02020;transform:scaleX(0.8026);">1</span>
<span class="t" style="left:289px;top:205.3px;font-size:8.5px;color:#222;transform:scaleX(0.9716);">0</span>
<span class="t" style="left:415.6px;top:205.3px;font-size:8.5px;color:#222;transform:scaleX(0.8026);">1</span>
<span class="t" style="left:10px;top:265.3px;font-size:9.5px;color:#333;transform:scaleX(0.9143);">B</span>
<span class="t" style="left:731.8px;top:241px;font-size:10.5px;color:#111;transform:scaleX(0.8739);">All</span>
<span class="t" style="left:729.5px;top:277.3px;font-size:11.5px;color:#111;transform:scaleX(0.7980);">,5 mm</span>
<span class="t" style="left:574px;top:150px;font-size:12px;color:#5a5a5a;font-weight:bold;transform:scaleX(0.9586);">Art to Stitch (Intelligent)</span>
<span class="t" style="left:574px;top:207px;font-size:12px;color:#5a5a5a;font-weight:bold;transform:scaleX(0.9282);">Art to Stitch (Area only)</span>
<span class="t" style="left:574px;top:265.5px;font-size:12px;color:#5a5a5a;font-weight:bold;transform:scaleX(0.9197);">Art to Stitch (Line only)</span>
<span class="t" style="left:574px;top:322px;font-size:12px;color:#5a5a5a;font-weight:bold;transform:scaleX(0.9466);">Vector To X-Stitch</span>
<span class="t" style="left:574px;top:380px;font-size:12px;color:#b4b4b4;font-weight:bold;transform:scaleX(0.9460);">Image to Photo-Stitch</span>
<!--MENUTEXT-->
</body>
</html>
